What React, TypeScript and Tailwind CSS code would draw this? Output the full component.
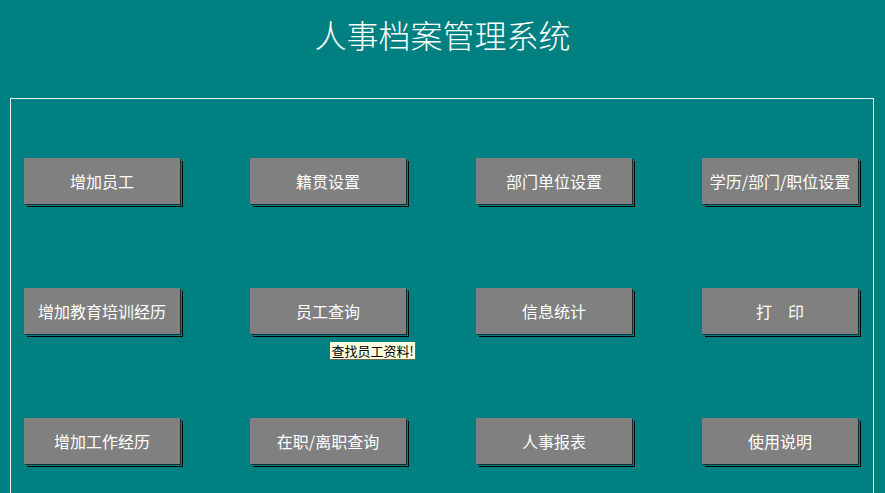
const buttons = [
  '增加员工',
  '籍贯设置',
  '部门单位设置',
  '学历/部门/职位设置',
  '增加教育培训经历',
  '员工查询',
  '信息统计',
  '打　印',
  '增加工作经历',
  '在职/离职查询',
  '人事报表',
  '使用说明',
]

export default function App() {
  return (
    <div
      className="w-[885px] h-[493px] bg-[#008080] overflow-hidden"
      style={{ fontFamily: '"Noto Sans CJK SC", "Noto Sans", sans-serif' }}
    >
      <div className="h-[98px] pt-[16px] text-center text-white text-[32px] leading-[36px] font-light">
        人事档案管理系统
      </div>

      <div className="ml-[10px] w-[864px] h-[395px] border-l border-t border-r border-[#e6f2f2] pt-[59px] pl-[13px]">
        <div className="grid grid-cols-[repeat(4,156px)] gap-x-[70px] gap-y-[84px]">
          {buttons.map((label) => (
            <div key={label} className="relative">
              <button className="w-[156px] h-[46px] bg-[#808080] text-white text-[16px] leading-none shadow-[1px_1px_0_#103030,2px_2px_0_#008080,3px_3px_0_#000]">
                {label}
              </button>
              {label === '员工查询' && (
                <div className="absolute left-[80px] top-[54px] z-10 w-[86px] h-[18px] whitespace-nowrap text-center bg-[#ffffe1] border-b border-r border-[#6b6b50] text-black text-[13px] leading-[17px]">
                  查找员工资料!
                </div>
              )}
            </div>
          ))}
        </div>
      </div>
    </div>
  )
}
